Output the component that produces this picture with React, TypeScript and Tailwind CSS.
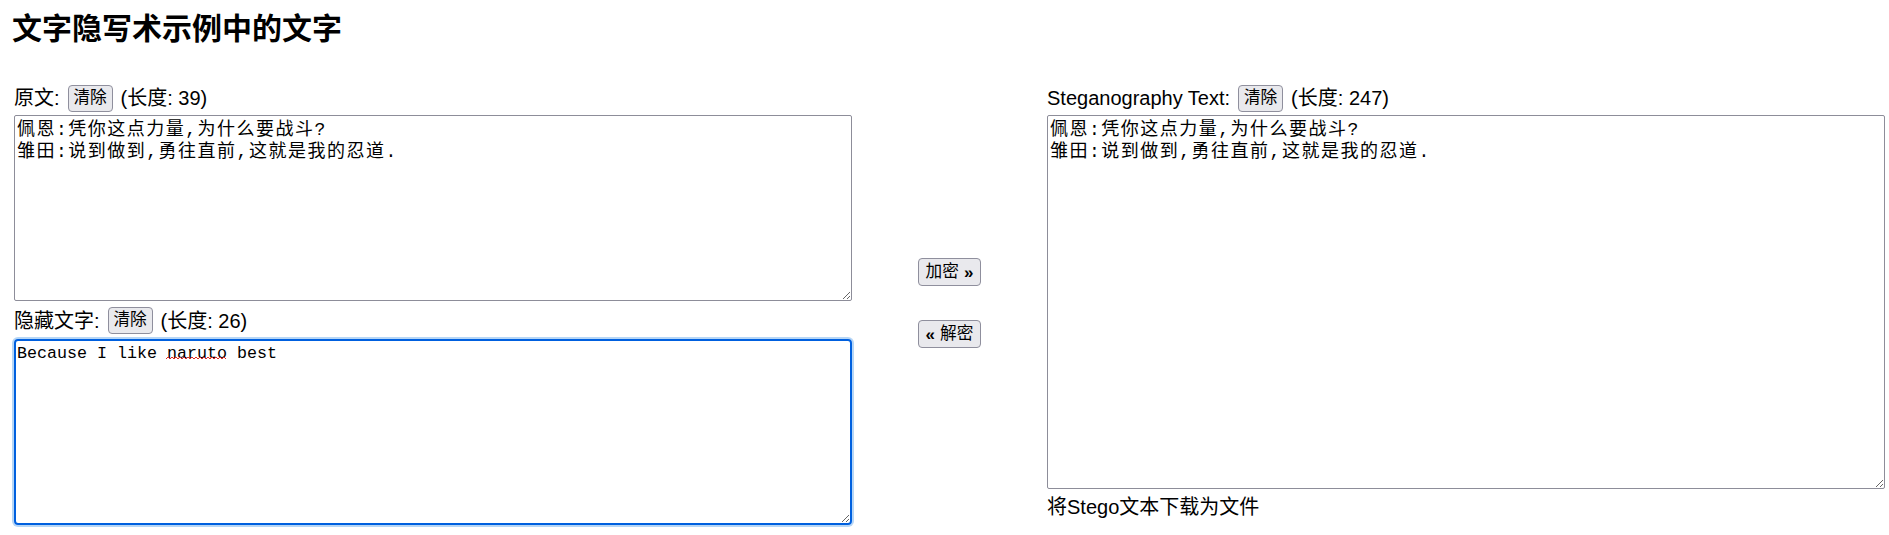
const sans = "font-['Liberation_Sans','Noto_Sans_CJK_SC',sans-serif]";

const original = "佩恩:凭你这点力量,为什么要战斗?\n雏田:说到做到,勇往直前,这就是我的忍道.";

function SmallButton({ children, className = "" }: { children: React.ReactNode; className?: string }) {
  return (
    <button
      className={`flex items-center justify-center rounded-[4px] border border-[#8f8f9d] bg-[#e9e9ed] text-[16.67px] leading-none text-black ${className}`}
    >
      {children}
    </button>
  );
}

function FieldLabel({ label, count, className = "" }: { label: string; count: number; className?: string }) {
  return (
    <div className={`flex items-center gap-2 text-[20px] leading-none ${className}`}>
      <span>{label}:</span>
      <SmallButton className="h-[27px] w-[45px]">清除</SmallButton>
      <span>(长度: {count})</span>
    </div>
  );
}

export default function App() {
  return (
    <div className={`min-h-screen bg-white pl-[14px] pr-[4px] pt-[8px] text-black ${sans}`}>
      <h2 className="text-[30px] font-bold leading-[37px] -ml-[2px] font-['Noto_Sans_CJK_SC',sans-serif]">
        文字隐写术示例中的文字
      </h2>

      <div className="mt-[36px] flex">
        {/* source + hidden text */}
        <div className="flex w-[838px] flex-col">
          <FieldLabel label="原文" count={39} className="h-[34px]" />
          <textarea
            readOnly
            defaultValue={original}
            spellCheck={false}
            className="h-[186px] w-full rounded-[2px] border border-[#8d8d99] px-[2px] py-[3px] font-['Liberation_Mono','Noto_Sans_CJK_SC',monospace] text-[18px] leading-[22px] tracking-[1.5px] outline-none"
          />
          <FieldLabel label="隐藏文字" count={26} className="h-[38px] pt-[1px]" />
          <div className="relative">
            <textarea
              readOnly
              defaultValue="Because I like naruto best"
              spellCheck={false}
              className="block h-[186px] w-full rounded-[4px] border-2 border-[#0060df] px-[1px] py-[2px] font-['Liberation_Mono','Noto_Sans_CJK_SC',monospace] text-[16.67px] leading-[21px] shadow-[0_0_0_2px_#b6d6f6] outline-none"
            />
            <svg className="absolute left-[152px] top-[17px]" width="60" height="4" viewBox="0 0 60 4">
              <path
                d="M0 3 L2 1 L4 3 L6 1 L8 3 L10 1 L12 3 L14 1 L16 3 L18 1 L20 3 L22 1 L24 3 L26 1 L28 3 L30 1 L32 3 L34 1 L36 3 L38 1 L40 3 L42 1 L44 3 L46 1 L48 3 L50 1 L52 3 L54 1 L56 3 L58 1 L60 3"
                fill="none"
                stroke="#e0281e"
                strokeWidth="1"
              />
            </svg>
          </div>
        </div>

        {/* actions */}
        <div className="flex w-[195px] flex-col items-center pt-[177px]">
          <SmallButton className="h-[28px] w-[63px] gap-[5px]">
            <span>加密</span>
            <span className="text-[17px] font-bold">»</span>
          </SmallButton>
          <SmallButton className="mt-[34px] h-[28px] w-[63px] gap-[5px]">
            <span className="text-[17px] font-bold">«</span>
            <span>解密</span>
          </SmallButton>
        </div>

        {/* stego output */}
        <div className="flex w-[838px] flex-col">
          <FieldLabel label="Steganography Text" count={247} className="h-[34px]" />
          <textarea
            readOnly
            defaultValue={original}
            spellCheck={false}
            className="h-[374px] w-full rounded-[2px] border border-[#8d8d99] px-[2px] py-[3px] font-['Liberation_Mono','Noto_Sans_CJK_SC',monospace] text-[18px] leading-[22px] tracking-[1.5px] outline-none"
          />
          <div className="mt-[4px] text-[20px] leading-[28px]">将Stego文本下载为文件</div>
        </div>
      </div>
    </div>
  );
}
